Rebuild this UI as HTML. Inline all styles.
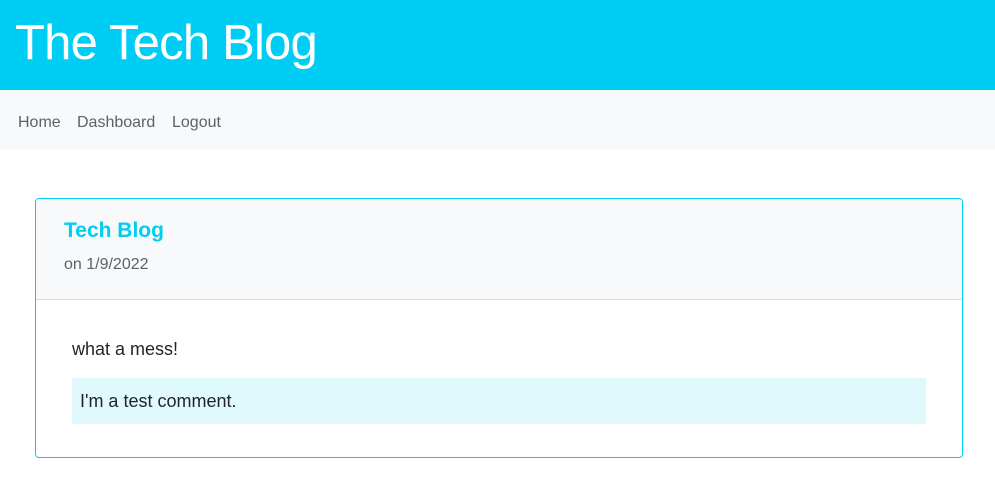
<!DOCTYPE html>
<html><head><style>
body{margin:0;font-family:"Liberation Sans",sans-serif;background:#fff;width:995px;height:491px;overflow:hidden}
.hdr{background:#00cdf4;height:90px;position:relative}
.hdr h1{margin:0;position:absolute;left:15px;top:15px;font-weight:300;font-size:49px;color:#fff;letter-spacing:-0.8px}
.nav{background:#f8f9fa;height:60px;position:relative;font-size:16px;color:#5d6166}
.nav span{position:absolute;top:24px}
.card{position:absolute;left:35px;top:198px;width:928px;height:260px;border:1px solid #00cdf4;border-radius:4px;box-sizing:border-box;overflow:hidden}
.ch{background:#f8f9fa;height:100px;border-bottom:1px solid #d8dde2;position:relative}
.ch .t{position:absolute;left:28px;top:20px;font-size:21px;font-weight:bold;color:#00cdf4}
.ch .d{position:absolute;left:28px;top:57px;font-size:16px;color:#5d6166}
.b1{position:absolute;left:36px;top:140px;font-size:18px;color:#212529}
.cm{position:absolute;left:36px;top:179px;width:854px;height:46px;background:#e0f9fd;font-size:18px;color:#212529}
.cm span{position:absolute;left:8px;top:13px}
</style></head><body>
<div class="hdr"><h1>The Tech Blog</h1></div>
<div class="nav"><span style="left:18px">Home</span><span style="left:77px">Dashboard</span><span style="left:172px">Logout</span></div>
<div class="card">
<div class="ch"><div class="t">Tech Blog</div><div class="d">on 1/9/2022</div></div>
<div class="b1">what a mess!</div>
<div class="cm"><span>I'm a test comment.</span></div>
</div>
</body></html>
